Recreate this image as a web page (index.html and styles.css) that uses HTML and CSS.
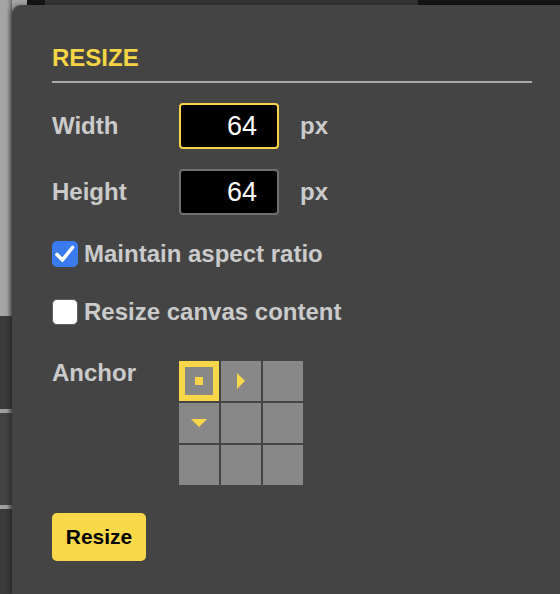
FILE: index.html
```html
<!DOCTYPE html>
<html>
<head>
<meta charset="utf-8">
<link rel="stylesheet" href="styles.css">
</head>
<body>
<div class="page">
  <div class="side">
    <div class="side-a"></div>
    <div class="side-b"></div>
    <div class="side-line"></div>
    <div class="side-c"></div>
    <div class="side-line"></div>
    <div class="side-b grow"></div>
  </div>
  <div class="main">
    <div class="topbar">
      <div class="tb-a"></div>
      <div class="tb-b"></div>
      <div class="tb-c"></div>
      <div class="tb-d"></div>
    </div>
    <div class="dialog">
      <h2 class="title">RESIZE</h2>
      <div class="field">
        <label class="label">Width</label>
        <input class="num focused" type="text" value="64">
        <span class="unit">px</span>
      </div>
      <div class="field second">
        <label class="label">Height</label>
        <input class="num" type="text" value="64">
        <span class="unit">px</span>
      </div>
      <div class="check first">
        <span class="box checked">
          <svg width="26" height="26" viewBox="0 0 26 26"><path d="M5 13.5 L10.5 19 L20.5 6.5" fill="none" stroke="#fff" stroke-width="3.6" stroke-linecap="round" stroke-linejoin="round"/></svg>
        </span>
        <span class="check-text">Maintain aspect ratio</span>
      </div>
      <div class="check next">
        <span class="box"></span>
        <span class="check-text">Resize canvas content</span>
      </div>
      <div class="anchor-row">
        <span class="label">Anchor</span>
        <div class="grid">
          <div class="cell selected"><span class="dot"></span></div>
          <div class="cell"><svg width="8" height="16" viewBox="0 0 8 16"><path d="M0 0 L8 8 L0 16 Z" fill="#f9d648"/></svg></div>
          <div class="cell"></div>
          <div class="cell"><svg width="16" height="8" viewBox="0 0 16 8"><path d="M0 0 L16 0 L8 8 Z" fill="#f9d648"/></svg></div>
          <div class="cell"></div>
          <div class="cell"></div>
          <div class="cell"></div>
          <div class="cell"></div>
          <div class="cell"></div>
        </div>
      </div>
      <button class="btn" type="button">Resize</button>
    </div>
  </div>
</div>
</body>
</html>
```

FILE: styles.css
```css
html, body {
  margin: 0;
  padding: 0;
  width: 560px;
  height: 594px;
  overflow: hidden;
  background: #3a3a3a;
  font-family: "Liberation Sans", Arial, sans-serif;
}

.page {
  display: flex;
  width: 560px;
  height: 594px;
}

.side {
  width: 12px;
  display: flex;
  flex-direction: column;
}
.side-a { height: 316px; background: linear-gradient(to right, #a4a4a4 0, #a4a4a4 7px, #8a8a8a 10px, #6a6a6a 12px); }
.side-b { height: 93px; background: #3b3b3b; }
.side-line { height: 4px; background: linear-gradient(to right, #a0a0a0 0, #a0a0a0 7px, #6a6a6a 12px); }
.side-c { height: 92px; background: #434343; }
.grow { flex: 1; }

.main {
  flex: 1;
  display: flex;
  flex-direction: column;
  background: #a4a4a4;
}

.topbar {
  height: 5px;
  display: flex;
}
.tb-a { width: 15px; background: #a4a4a4; }
.tb-b { width: 18px; background: #151515; }
.tb-c { width: 373px; background: #353535; }
.tb-d { flex: 1; background: #151515; }

.dialog {
  flex: 1;
  background: #444444;
  border-top-left-radius: 9px;
  box-shadow: -2px 0 5px rgba(0, 0, 0, 0.35);
  padding: 41px 28px 0 40px;
  display: flex;
  flex-direction: column;
  align-items: flex-start;
}

.title {
  align-self: stretch;
  margin: 0;
  font-size: 24px;
  line-height: 24px;
  font-weight: bold;
  color: #f5d445;
  padding-bottom: 11px;
  border-bottom: 2px solid #a9a9a9;
}

.field {
  display: flex;
  align-items: center;
  margin-top: 20px;
  height: 46px;
}
.field.second { margin-top: 20px; }

.label {
  width: 127px;
  font-size: 24px;
  line-height: 24px;
  font-weight: bold;
  color: #cbcbcb;
}

.num {
  box-sizing: border-box;
  width: 100px;
  height: 46px;
  margin: 0;
  background: #000;
  border: 2px solid #707070;
  border-radius: 4px;
  color: #fff;
  font-family: "Liberation Sans", Arial, sans-serif;
  font-size: 27px;
  text-align: right;
  padding: 0 20px 0 4px;
  outline: none;
}
.num.focused { border-color: #f5d445; }

.unit {
  margin-left: 21px;
  font-size: 24px;
  line-height: 24px;
  font-weight: bold;
  color: #cbcbcb;
}

.check {
  display: flex;
  align-items: center;
  height: 26px;
}
.check.first { margin-top: 26px; }
.check.next { margin-top: 32px; }

.box {
  box-sizing: border-box;
  width: 26px;
  height: 26px;
  border-radius: 5px;
  background: #ffffff;
  border: 1px solid #5e5e5e;
  display: flex;
}
.box.checked {
  background: #3a7cf0;
  border: none;
}

.check-text {
  margin-left: 6px;
  font-size: 24px;
  line-height: 24px;
  font-weight: bold;
  color: #cbcbcb;
}

.anchor-row {
  display: flex;
  align-items: flex-start;
  margin-top: 36px;
}

.grid {
  display: grid;
  grid-template-columns: repeat(3, 40px);
  grid-auto-rows: 40px;
  gap: 2px;
}

.cell {
  box-sizing: border-box;
  background: #888888;
  display: flex;
  align-items: center;
  justify-content: center;
}
.cell.selected {
  border: 6px solid #f9d648;
}
.dot {
  width: 8px;
  height: 8px;
  background: #f9d648;
}

.btn {
  margin-top: 28px;
  width: 94px;
  height: 48px;
  border: none;
  border-radius: 5px;
  background: #f9d949;
  color: #000;
  font-family: "Liberation Sans", Arial, sans-serif;
  font-size: 21px;
  font-weight: bold;
  padding: 0;
}
```
